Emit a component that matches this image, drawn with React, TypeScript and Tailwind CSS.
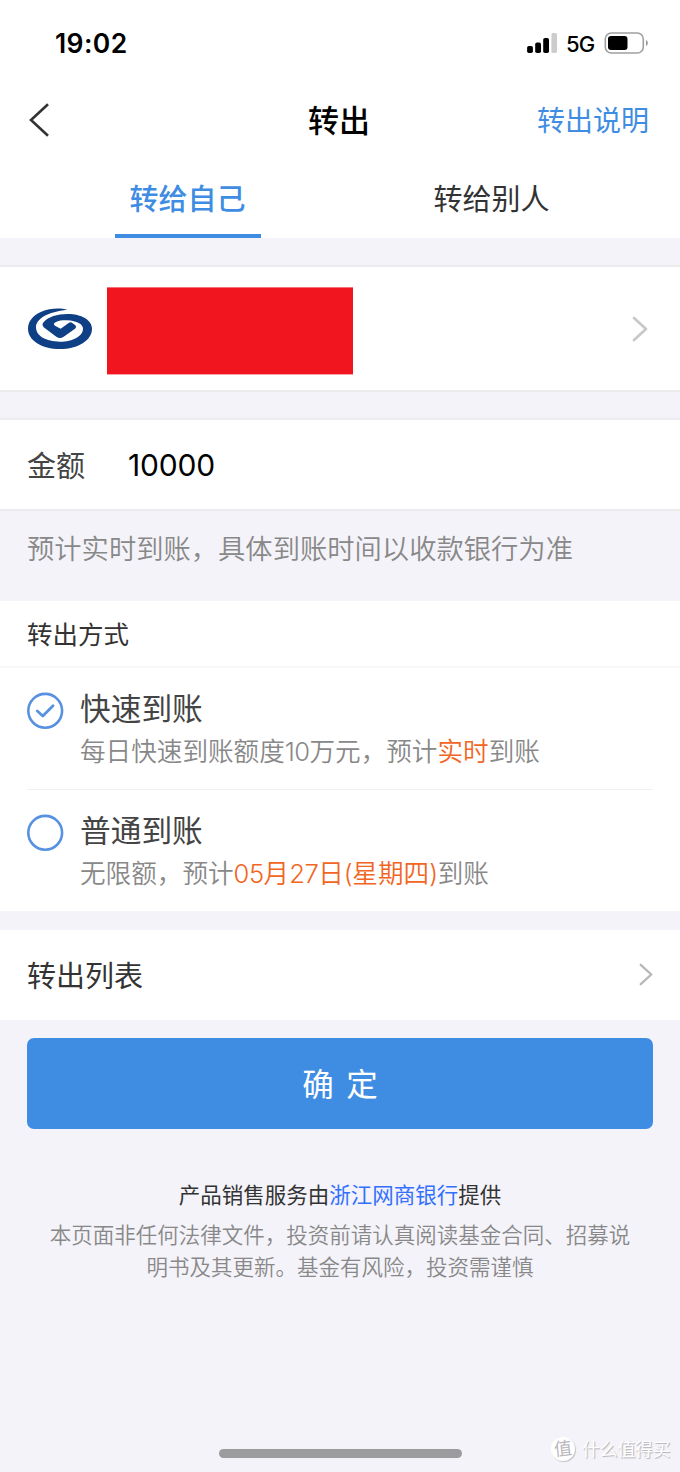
import type { ReactNode } from "react";

function StatusBar() {
  return (
    <div className="flex h-[86px] items-center justify-between pr-[31px] pl-[55px]">
      <span className="text-[26.5px] leading-8 font-semibold tracking-[0.4px]">19:02</span>
      <div className="flex items-center">
        <svg className="h-5 w-[31px] overflow-visible" viewBox="0 0 31 20">
          <rect x="-0.9" y="13" width="5.8" height="7" rx="1.8" />
          <rect x="7.2" y="9.5" width="5.8" height="10.5" rx="1.8" />
          <rect x="15.2" y="5" width="5.8" height="15" rx="1.8" />
          <rect x="23.4" y="0" width="5.6" height="20" rx="1.8" fill="#cccccc" />
        </svg>
        <span className="ml-[7px] w-[30px] translate-y-px text-[22px] leading-6 font-medium tracking-[-0.8px]">5G</span>
        <svg className="ml-[9px] h-[22px] w-[44px] overflow-visible" viewBox="0 0 44 22">
          <rect x="0.3" y="1" width="38" height="20" rx="6" fill="none" stroke="#a0a0a0" strokeWidth="1.6" />
          <rect x="3" y="4" width="19.5" height="14" rx="3" />
          <path d="M41 8c2.4 1 2.4 5 0 6z" fill="#999999" />
        </svg>
      </div>
    </div>
  );
}

function Chevron({ className }: { className: string }) {
  return (
    <svg className={className} viewBox="0 0 16 26" fill="none" strokeWidth="2.7" strokeLinecap="round" strokeLinejoin="round">
      <path d="M2 2L14 13L2 24" />
    </svg>
  );
}

function BankLogo() {
  return (
    <svg className="h-[42px] w-[66px]" viewBox="0 0 198 126" fill="#0f3f84">
      <path d="M121 5C99 -1 66 1 43 11C16 23 3 41 3 62C3 97 44 123 99 123C153 123 195 97 195 62C195 36 163 18 122 18C90 18 64 27 51 41C44 48 46 54 53 60L88 86Q99 94 110 86L144 62Q150 56 144 51L136 45Q131 41 125 45L101 62L84 53C77 48 82 44 89 41C98 37 110 36 121 37C149 39 168 48 168 62C168 84 138 101 99 101C57 101 27 84 27 58C27 32 62 11 121 5Z" />
    </svg>
  );
}

function Option({ title, checked, children }: { title: string; checked?: boolean; children: ReactNode }) {
  return (
    <div className="flex h-[122px] pt-[25px]">
      <svg className="h-[37px] w-[37px]" viewBox="0 0 37 37" fill="none" stroke="#5891e2">
        <circle cx="18.2" cy="18.8" r="16.9" strokeWidth="2.6" />
        {checked && <path d="M10.3 19L15.8 24L26 13.8" strokeWidth="2.8" strokeLinecap="round" strokeLinejoin="round" />}
      </svg>
      <div className="ml-4">
        <div className="-mt-1 text-[30.7px] leading-[42px] text-[#444444]">{title}</div>
        <div className="mt-[2px] text-[25.6px] leading-[40px] font-[350] whitespace-nowrap text-[#888888]">{children}</div>
      </div>
    </div>
  );
}

export default function App() {
  return (
    <div className="flex h-[1472px] w-[680px] flex-col overflow-hidden bg-[#f4f3f9] font-[Inter,'Noto_Sans_CJK_SC',sans-serif] text-black">
      <header className="h-[238px] shrink-0 bg-white">
        <StatusBar />
        <div className="grid h-[69px] grid-cols-3 items-center pr-[31px] pl-[29px]">
          <svg className="h-[34px] w-[20px] -translate-y-px" viewBox="0 0 20 34" fill="none" stroke="#333333" strokeWidth="2.6">
            <path d="M19 1.2L2 17L19 32.8" />
          </svg>
          <h1 className="text-center text-[31px] leading-[40px] font-medium">转出</h1>
          <a className="pt-px text-right text-[28px] leading-[40px] text-[#3f8de2]">转出说明</a>
        </div>
        <nav className="flex h-[83px] justify-center gap-[158px]">
          <div className="h-full w-[146px] border-b-4 border-[#3f8de2] pt-[24px] pr-px text-center text-[29px] leading-[42px] font-medium text-[#3f8de2]">转给自己</div>
          <div className="h-full w-[146px] pt-[24px] pr-px text-center text-[29px] leading-[42px] text-[#333333]">转给别人</div>
        </nav>
      </header>

      <section className="mt-[27px] flex h-[127px] shrink-0 items-center border-y-2 border-[#ececef] bg-white pr-[32px] pl-[27px]">
        <BankLogo />
        <div className="ml-[14.4px] h-[87px] w-[246px] translate-y-[2.4px] bg-[#f0151f]" />
        <Chevron className="ml-auto h-[26px] w-4 stroke-[#c7c7cc]" />
      </section>

      <section className="mt-[26px] flex h-[93px] shrink-0 items-center border-y-2 border-[#ececef] bg-white px-[27px]">
        <span className="w-[101px] pt-1 text-[29px] text-[#444444]">金额</span>
        <span className="pt-[2px] text-[30px] tracking-[-0.2px]">10000</span>
      </section>
      <p className="h-[90px] shrink-0 px-[27px] pt-[19px] text-[27.3px] leading-[40px] font-[350] whitespace-nowrap text-[#888888]">
        预计实时到账，具体到账时间以收款银行为准
      </p>

      <section className="h-[310px] shrink-0 bg-white">
        <h2 className="flex h-[67px] items-center border-b-2 border-[#f7f7f8] px-[27px] pt-[4px] text-[25.5px] text-[#333333]">转出方式</h2>
        <div className="-mt-px px-[27px]">
          <Option title="快速到账" checked>
            每日快速到账额度<span className="tracking-[-0.6px]">10</span>万元，预计<span className="text-[#f26522]">实时</span>到账
          </Option>
          <div className="h-px bg-[#f0f0f2]" />
          <div className="-mt-px">
            <Option title="普通到账">
              无限额，预计<span className="text-[#f26522]"><span className="tracking-[-0.5px]">05</span>月<span className="tracking-[-0.5px]">27</span>日<span className="tracking-[-0.4px]">(</span>星期四<span className="tracking-[-0.4px]">)</span></span>到账
            </Option>
          </div>
        </div>
      </section>

      <section className="mt-[19px] flex h-[90px] shrink-0 items-center justify-between bg-white pr-[27px] pl-[27px]">
        <span className="pt-1 text-[29px] text-[#333333]">转出列表</span>
        <Chevron className="h-[23px] w-[14px] -translate-y-px stroke-[#b8b8b8]" />
      </section>

      <button className="mx-[27px] mt-[18px] h-[91px] shrink-0 rounded-[7px] bg-[#3f8de2] pt-[3px] text-[31.5px] [word-spacing:3.5px] text-white">确 定</button>

      <footer className="mt-[46px] text-center">
        <p className="text-[21.5px] leading-[40px] text-[#333333]">
          产品销售服务由<span className="text-[#3370ff]">浙江网商银行</span>提供
        </p>
        <p className="mt-[4px] text-[21.5px] leading-[32px] font-[350] text-[#888888]">
          本页面非任何法律文件，投资前请认真阅读基金合同、招募说
          <br />
          明书及其更新。基金有风险，投资需谨慎
        </p>
      </footer>

      <div className="mt-auto flex h-[46px] shrink-0 items-center pl-[219px]">
        <div className="h-[9px] w-[243px] translate-y-[4px] rounded-full bg-[#9c9c9e]" />
        <div className="ml-[89px] flex items-center">
          <span className="flex h-6 w-6 items-center justify-center rounded-full bg-white text-[18px] leading-6 text-[#b9b9be] shadow-[1px_1px_1px_#c4c4c9]">
            <span className="-rotate-6">值</span>
          </span>
          <span className="mt-[2px] ml-[7px] text-[17.7px] leading-6 text-white [text-shadow:1px_1px_1px_#b0b0b5]">什么值得买</span>
        </div>
      </div>
    </div>
  );
}
